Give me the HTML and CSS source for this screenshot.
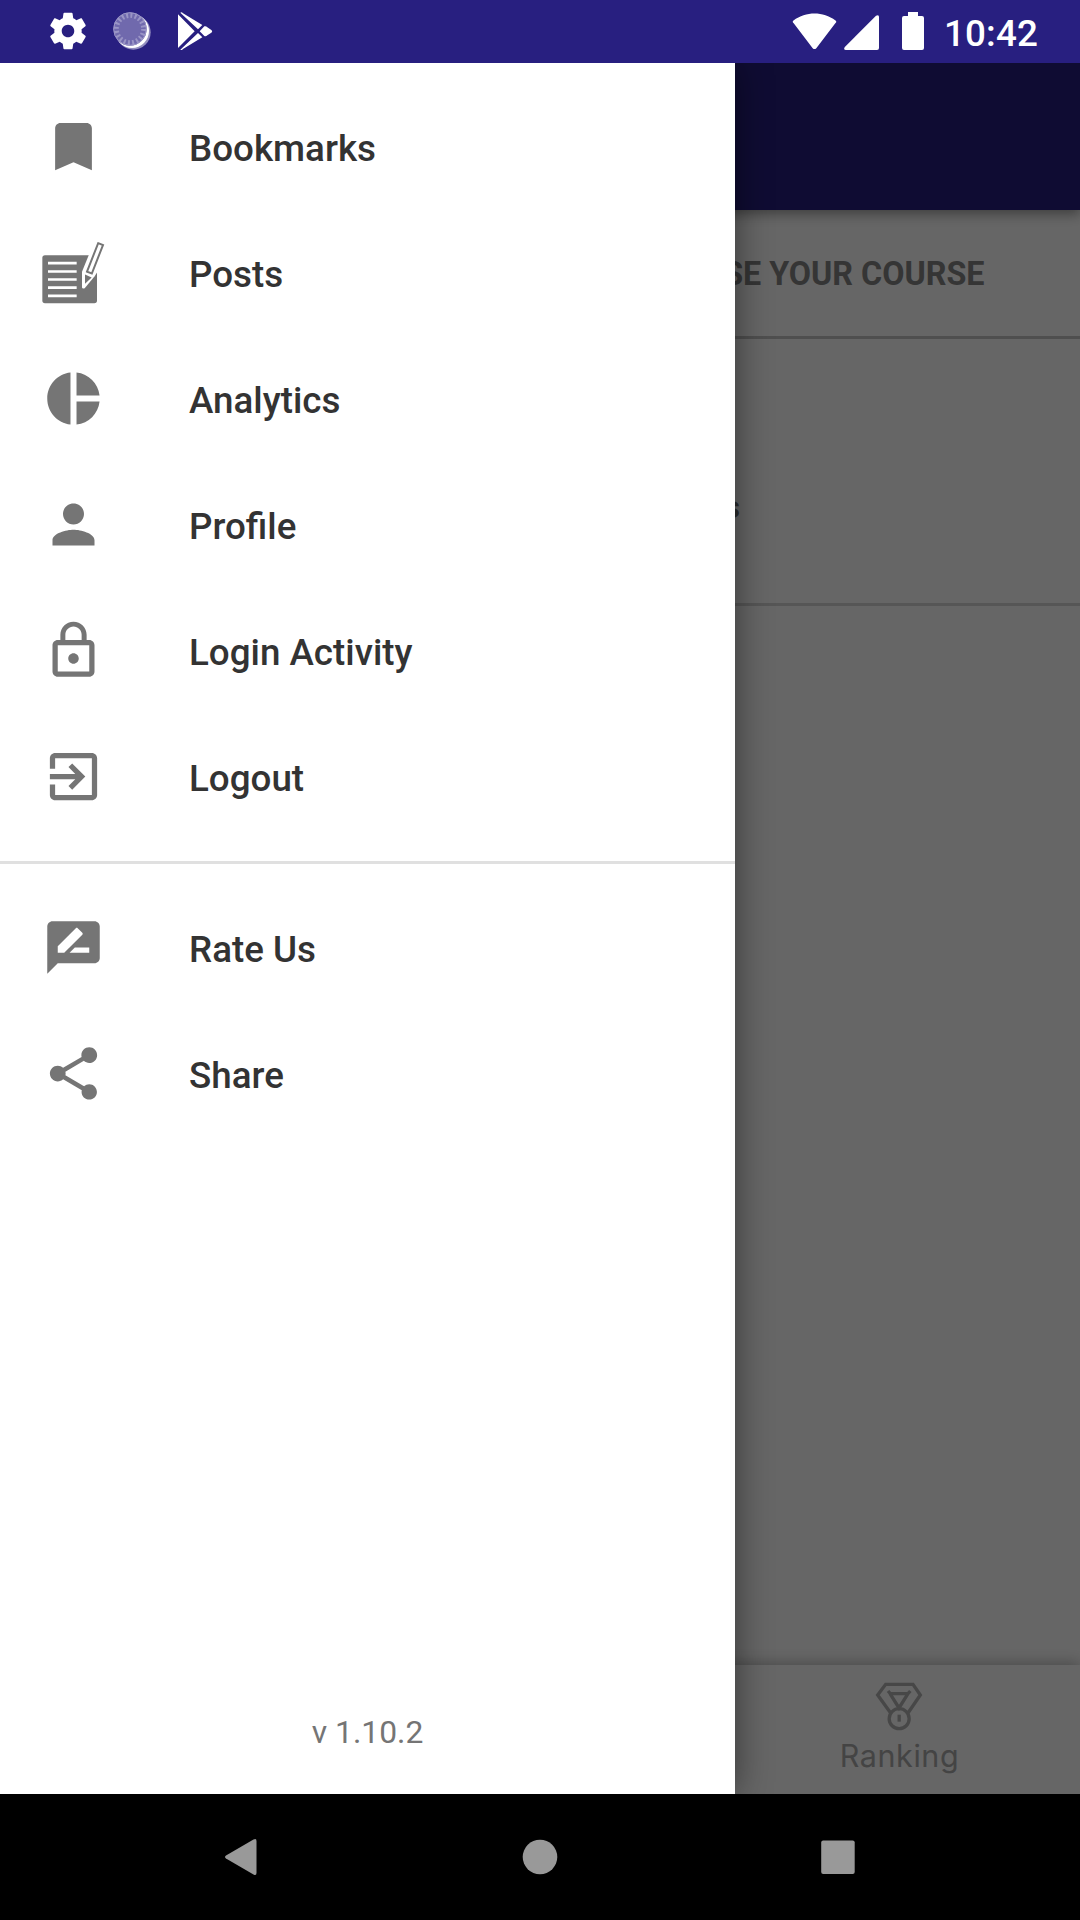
FILE: index.html
```html
<!DOCTYPE html>
<html lang="en">
<head>
<meta charset="utf-8">
<title>Navigation drawer</title>
<link rel="stylesheet" href="styles.css">
</head>
<body>
<div class="phone">
  <header class="status">
    <div class="status-left">
      <svg class="st-icon" viewBox="2 2 20 20"><path d="M19.14 12.94c.04-.3.06-.61.06-.94 0-.32-.02-.64-.07-.94l2.03-1.58c.18-.14.23-.41.12-.61l-1.92-3.32c-.12-.22-.37-.29-.59-.22l-2.39.96c-.5-.38-1.03-.7-1.62-.94l-.36-2.54c-.04-.24-.24-.41-.48-.41h-3.84c-.24 0-.43.17-.47.41l-.36 2.54c-.59.24-1.13.57-1.62.94l-2.39-.96c-.22-.08-.47 0-.59.22L2.74 8.87c-.12.21-.08.47.12.61l2.03 1.58c-.05.3-.09.63-.09.94s.02.64.07.94l-2.03 1.58c-.18.14-.23.41-.12.61l1.92 3.32c.12.22.37.29.59.22l2.39-.96c.5.38 1.03.7 1.62.94l.36 2.54c.05.24.24.41.48.41h3.84c.24 0 .44-.17.47-.41l.36-2.54c.59-.24 1.13-.56 1.62-.94l2.39.96c.22.08.47 0 .59-.22l1.92-3.32c.12-.22.07-.47-.12-.61l-2.01-1.58zM12 15.3c-1.82 0-3.3-1.48-3.3-3.3s1.48-3.3 3.3-3.3 3.3 1.48 3.3 3.3-1.48 3.3-3.3 3.3z"/></svg>
      <svg class="st-icon" viewBox="0 0 114 114"><circle cx="61" cy="61" r="52" opacity=".5"/><circle cx="57" cy="57" r="51"/><circle cx="51" cy="51" r="50" fill="#7069ad"/><circle cx="51" cy="51" r="41" fill="none" stroke="#9a95c6" stroke-width="15" stroke-dasharray="6 6.88"/><circle cx="51" cy="51" r="49" fill="none" stroke="#9a95c6" stroke-width="3"/></svg>
      <svg class="st-icon" viewBox="531 37 114 114"><path d="M534 44L584 95L534 145ZM541 39Q545 36 549 41L607 76L594 89ZM541 150Q545 153 549 148L607 113L594 100ZM613 80Q618 78 622 83L634 91Q639 95 634 99L622 107Q618 111 613 109L599 95Z"/></svg>
    </div>
    <div class="status-right">
      <svg class="wifi" viewBox="0 0 45 37"><path d="M1.5 10Q0 8.500 1.500 7.500C14-1.800 31-1.800 43.500 7.500Q45 8.500 43.500 10L24.300 35.200Q22.500 37 20.700 35.200Z"/></svg>
      <svg class="signal" viewBox="0 0 35 35"><path d="M32 .8Q35-1 35 2V33Q35 35 33 35H2Q-1 35 .8 32Z"/></svg>
      <svg class="battery" viewBox="0 0 22 38"><path d="M6 0H16V4H20Q22 4 22 6V36Q22 38 20 38H2Q0 38 0 36V6Q0 4 2 4H6Z"/></svg>
      <span class="clock">10:42</span>
    </div>
  </header>

  <main class="stage">
    <div class="screen">
      <div class="appbar"></div>
      <h1 class="heading">CHOOSE YOUR COURSE</h1>
      <div class="course"><span>s</span></div>
      <div class="space"></div>
      <nav class="tabs">
        <div class="tab">
          <svg class="medal" viewBox="520 123 156 150"><g fill="none" stroke-width="10"><path d="M573 219L534 165L558 133H640L662 165L625 219"/><path d="M565 153L572 161H625L632 153M571 161L598 204L625 161"/><circle cx="598.500" cy="236" r="30"/><path d="M598.500 224V245"/></g></svg>
          <span>Ranking</span>
        </div>
      </nav>
    </div>
    <div class="scrim"></div>
    <aside class="drawer">
      <ul class="menu">
        <li><svg viewBox="0 0 24 24"><path d="M17 3H7c-1.100 0-1.990.9-1.990 2L5 21l7-3 7 3V5c0-1.100-.9-2-2-2z"/></svg><span>Bookmarks</span></li>
        <li><svg viewBox="126 482.500 189 189"><rect x="127" y="525" width="164" height="144" rx="8"/><path d="M144 549H230M144 574H230M144 598H230M144 622.500H230M144 647H230" stroke="#fff" stroke-width="8"/><path d="M269 518L246 575V622Q247 626 254 624L284 588L291 577L320 488L290 478Z" fill="#fff"/><path d="M294.500 489L309 494.500L275.500 580L261 574.500Z" fill="none" stroke="#757575" stroke-width="6"/><path d="M255 583L275 592L255 611Z"/></svg><span>Posts</span></li>
        <li><svg viewBox="0 0 24 24"><path d="M10.850 2.070V21.930C5.850 21.400 2 17.150 2 12S5.850 2.600 10.850 2.070ZM13.150 2.070V10.850H21.930C21.420 6.200 17.800 2.550 13.150 2.070ZM13.150 13.150V21.930C17.800 21.450 21.420 17.800 21.930 13.150Z"/></svg><span>Analytics</span></li>
        <li><svg viewBox="0 0 24 24"><path d="M12 12c2.210 0 4-1.790 4-4s-1.790-4-4-4-4 1.790-4 4 1.790 4 4 4zm0 2c-2.670 0-8 1.340-8 4v2h16v-2c0-2.660-5.330-4-8-4z"/></svg><span>Profile</span></li>
        <li><svg viewBox="0 0 24 24"><path d="M12 17c1.100 0 2-.9 2-2s-.9-2-2-2-2 .9-2 2 .9 2 2 2zm6-9h-1V6c0-2.760-2.240-5-5-5S7 3.240 7 6v2H6c-1.100 0-2 .9-2 2v10c0 1.100.9 2 2 2h12c1.100 0 2-.9 2-2V10c0-1.100-.9-2-2-2zM8.900 6c0-1.710 1.390-3.100 3.100-3.100s3.100 1.390 3.100 3.100v2H8.900V6zM18 20H6V10h12v10z"/></svg><span>Login Activity</span></li>
        <li><svg viewBox="0 0 24 24"><path d="M10.090 15.590L11.500 17l5-5-5-5-1.410 1.410L12.670 11H3v2h9.670l-2.580 2.590zM19 3H5c-1.110 0-2 .9-2 2v4h2V5h14v14H5v-4H3v4c0 1.100.89 2 2 2h14c1.100 0 2-.9 2-2V5c0-1.100-.9-2-2-2z"/></svg><span>Logout</span></li>
      </ul>
      <ul class="menu menu-more">
        <li><svg viewBox="0 0 24 24"><path d="M20 2H4c-1.100 0-1.990.9-1.990 2L2 22l4-4h14c1.100 0 2-.9 2-2V4c0-1.100-.9-2-2-2zM6 14v-2.470l6.880-6.880c.2-.2.510-.2.710 0l1.770 1.770c.2.200.2.510 0 .71L8.470 14H6zm12 0h-7.500l2-2H18v2z"/></svg><span>Rate Us</span></li>
        <li><svg viewBox="0 0 24 24"><path d="M18 16.080c-.76 0-1.440.3-1.960.77L8.910 12.700c.05-.23.090-.46.090-.7s-.04-.47-.09-.7l7.050-4.110c.54.500 1.250.81 2.040.81 1.660 0 3-1.340 3-3s-1.340-3-3-3-3 1.340-3 3c0 .24.040.47.090.7L8.040 9.810C7.500 9.310 6.790 9 6 9c-1.660 0-3 1.340-3 3s1.340 3 3 3c.79 0 1.500-.31 2.040-.81l7.120 4.160c-.05.21-.08.430-.08.650 0 1.610 1.310 2.920 2.920 2.920s2.920-1.310 2.920-2.920-1.310-2.920-2.920-2.920z"/></svg><span>Share</span></li>
      </ul>
      <p class="version">v 1.10.2</p>
    </aside>
  </main>

  <footer class="navbar">
    <svg viewBox="0 0 36 38"><path d="M30.500 1.500Q33.500 0 33.500 3V35Q33.500 38 30.500 36.500L3 20.500Q1 19 3 17.500Z"/></svg>
    <svg viewBox="0 0 36 38"><circle cx="18" cy="19" r="17.300"/></svg>
    <svg viewBox="0 0 36 38"><rect x="1.200" y="2.500" width="33.500" height="33.500" rx="2"/></svg>
  </footer>
</div>
</body>
</html>
```
FILE: styles.css
```css
* { box-sizing: border-box; margin: 0; padding: 0; }
body { font-family: Roboto, "Liberation Sans", sans-serif; background: #000; }
svg { display: block; flex: none; }
.phone { width: 1080px; height: 1920px; display: flex; flex-direction: column; overflow: hidden; }

.status { height: 63px; flex: none; display: flex; justify-content: space-between; padding: 0 42px 1px 49px; background: #281f80; color: #fff; fill: #fff; }
.status-left { display: flex; align-items: center; gap: 26px; }
.st-icon { width: 38px; height: 38px; }
.status-right { display: flex; align-items: center; }
.wifi { width: 45px; height: 37px; }
.signal { width: 35px; height: 35px; margin: 3px 23px 0 7px; }
.battery { width: 22px; height: 38px; }
.clock { margin: 5px 0 0 20.5px; font-size: 36.75px; line-height: 43px; font-weight: 500; letter-spacing: .15px; }

.stage { position: relative; flex: 1; overflow: hidden; }
.screen { height: 100%; display: flex; flex-direction: column; background: #fff; isolation: isolate; }
.appbar { height: 147px; flex: none; background: #261f80; box-shadow: 0 4px 12px rgba(0, 0, 0, .4); z-index: 1; }
.heading { height: 129px; flex: none; border-bottom: 3px solid #c6c6c6; padding-right: 95.5px; text-align: right; font-size: 32.3px; line-height: 128px; font-weight: 700; color: #858585; }
.course { height: 267px; flex: none; border-bottom: 3px solid #d8d8d8; display: flex; justify-content: flex-end; align-items: center; padding: 76px 340px 0 0; font-size: 32px; line-height: 40px; font-weight: 700; color: #707070; }
.course span { margin-top: -4px; }
.space { flex: 1; }
.tabs { height: 129px; flex: none; display: flex; justify-content: flex-end; background: #fff; box-shadow: 0 -2px 14px rgba(0, 0, 0, .28); }
.tab { width: 363px; display: flex; flex-direction: column; align-items: center; gap: 5px; padding-top: 16px; color: #aaa; font-family: Inter, sans-serif; font-size: 30.5px; line-height: 40px; letter-spacing: .55px; }
.tab span { padding-left: 2px; }
.medal { width: 52px; height: 50px; stroke: #b2b2b2; }
.scrim { position: absolute; inset: 0; background: rgba(0, 0, 0, .6); }

.drawer { position: absolute; top: 0; left: 0; bottom: 0; width: 735px; display: flex; flex-direction: column; background: #fff; box-shadow: 0 0 34px rgba(0, 0, 0, .48); }
.menu { list-style: none; padding: 20px 0 22px; }
.menu-more { border-top: 3px solid #e0e0e0; }
.menu li { height: 126px; display: flex; align-items: center; padding-left: 42px; gap: 84px; font-size: 36.75px; line-height: 43px; font-weight: 500; color: #333; }
.menu span { padding-top: 4px; }
.menu svg { width: 63px; height: 63px; fill: #757575; overflow: visible; }
.version { margin-top: auto; padding-bottom: 43px; text-align: center; font-size: 31.8px; line-height: 37px; color: #757575; }

.navbar { height: 126px; flex: none; display: flex; align-items: center; justify-content: center; gap: 262.5px; padding: 0 1px 1px 0; background: #000; fill: #999; }
.navbar svg { width: 36px; height: 38px; }
```
